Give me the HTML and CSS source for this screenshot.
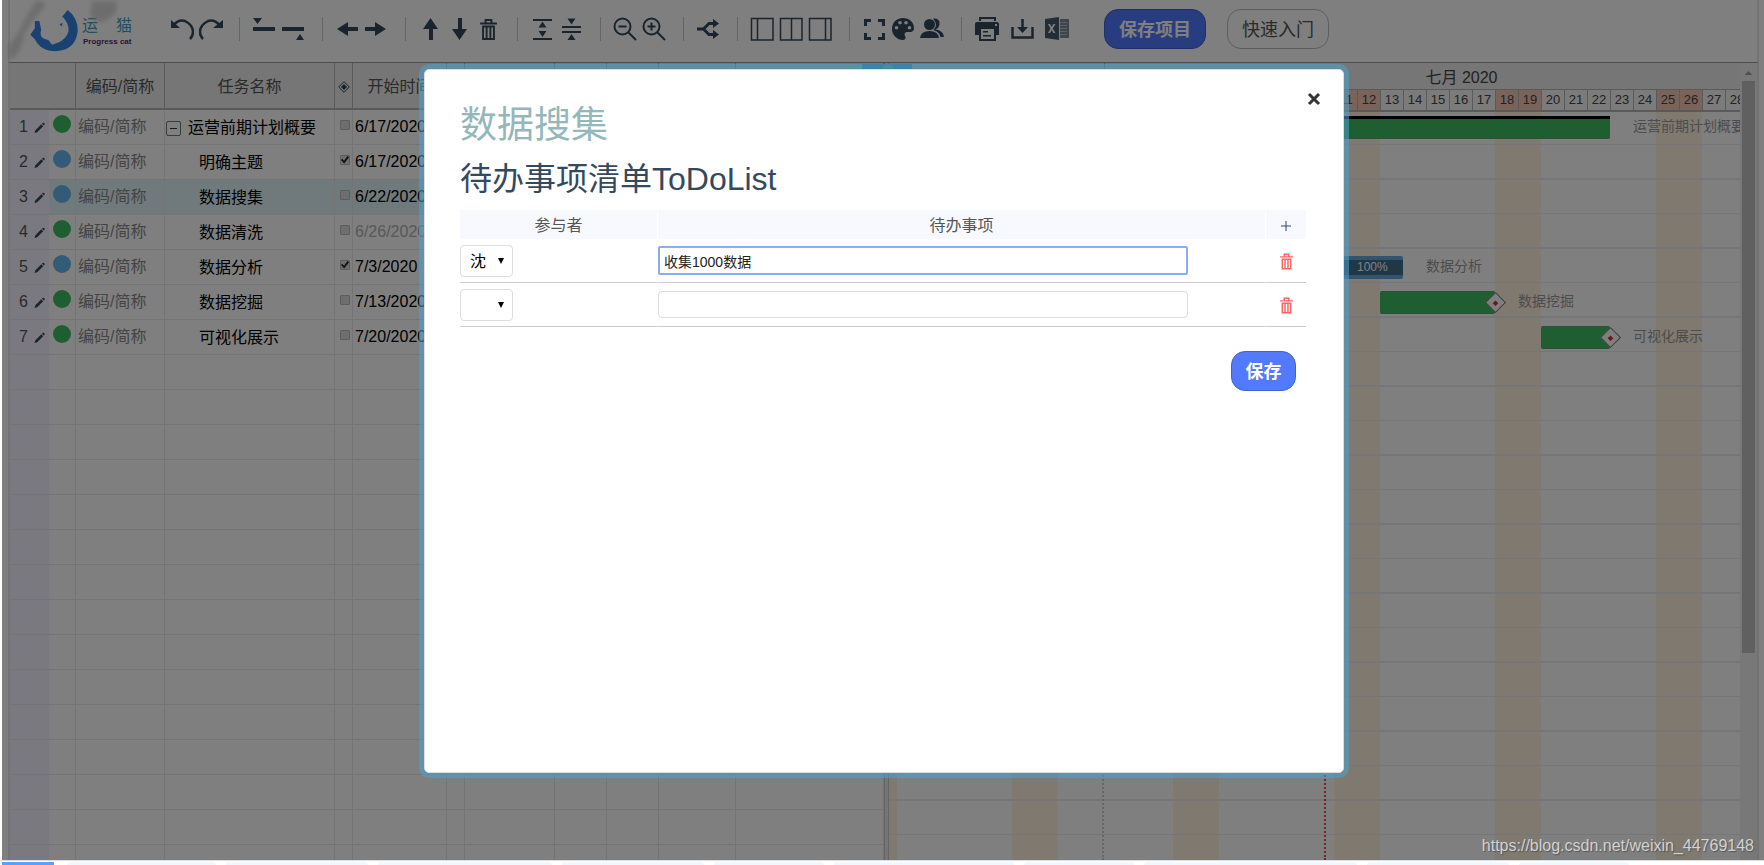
FILE: index.html
```html
<!DOCTYPE html>
<html lang="zh-CN">
<head>
<meta charset="utf-8">
<title>Progress cat</title>
<link rel="stylesheet" href="styles.css">
</head>
<body>
<svg class="sprite" aria-hidden="true">
  <symbol id="pencil" viewBox="0 0 12 12"><path d="M0.500 11.500 L1.500 8.500 L8 2 L10 4 L3.500 10.500Z M8.700 1.300 L9.700 .3 Q10.500 0 11.500 1 Q12 1.600 11.600 2.300 L10.700 3.300Z"/></symbol>
  <symbol id="trash" viewBox="0 0 16 20"><path fill="none" stroke="currentColor" stroke-width="1.800" d="M0 4.300H16M5.200 4V1H10.800V4M2.800 7V19H13.200V7M2 7.200H14M6.200 7V19M9.800 7V19"/></symbol>
</svg>
<div class="app">
  <header class="toolbar">
    <div class="logo">
      <svg class="logo-cat" viewBox="0 0 52 46" aria-hidden="true">
        <path fill="#3384e6" d="M35 7 L41 0 Q52 8 52 23 Q50 43 30 45 Q12 46 5 32 L0 27 L5 20 L5 12 L10 12 L12 22 Q10 28 14 31 L20 33 L24 38 L32 35 Q40 31 42 23 Q42 13 35 7Z M32 16 L35 14 L35 18Z"/>
      </svg>
      <div class="logo-words">
        <div class="logo-name"><span>运</span><span>猫</span></div>
        <div class="logo-sub">Progress cat</div>
      </div>
      <svg class="smudge" viewBox="0 0 130 62" aria-hidden="true">
        <path fill="#c4c4c4" d="M28 0 Q36 -2 37 6 Q24 18 16 34 Q14 52 2 59 L0 46 Q10 34 16 20Z M84 0 H108 Q112 12 100 18 Q90 26 82 14Z"/>
      </svg>
    </div>
    <div class="tools">
      <div class="group">
        <button aria-label="撤销"><svg viewBox="0 0 24 24"><path fill="none" stroke="currentColor" stroke-width="2.500" d="M3 9 Q8 2 15 4 Q23 8 23 15 Q23 19 20 22"/><path d="M1 3V11H10Z"/></svg></button>
        <button aria-label="重做"><svg viewBox="0 0 24 24"><path fill="none" stroke="currentColor" stroke-width="2.500" d="M21 9 Q16 2 9 4 Q1 8 1 15 Q1 19 4 22"/><path d="M24 3V11H14Z"/></svg></button>
      </div>
      <div class="group">
        <button aria-label="上方插入"><svg viewBox="0 0 24 24"><path d="M1 10H23V14H1Z M1 1H10L5.500 7Z"/></svg></button>
        <button aria-label="下方插入"><svg viewBox="0 0 24 24"><path d="M1 10H23V14H1Z M15 23H23L19 17Z"/></svg></button>
      </div>
      <div class="group">
        <button aria-label="升级"><svg viewBox="0 0 24 24"><path d="M2 12 L13 5V10H23V14H13V19Z"/></svg></button>
        <button aria-label="降级"><svg viewBox="0 0 24 24"><path d="M22 12 L11 5V10H1V14H11V19Z"/></svg></button>
      </div>
      <div class="group">
        <button aria-label="上移"><svg viewBox="0 0 24 24"><path d="M12.500 1 L20 12H15V23H11V12H5Z"/></svg></button>
        <button aria-label="下移"><svg viewBox="0 0 24 24"><path d="M12.500 23 L20 12H15V1H11V12H5Z"/></svg></button>
        <button aria-label="删除"><svg viewBox="0 0 24 24"><use href="#trash" x="4" y="2" width="17" height="21"/></svg></button>
      </div>
      <div class="group">
        <button aria-label="全部展开"><svg viewBox="0 0 24 24"><path d="M3 2H22V4H3Z M3 21H22V23H3Z M8.500 10.500H16.500L12.500 4.500Z M8.500 14H16.500L12.500 20Z"/></svg></button>
        <button aria-label="全部折叠"><svg viewBox="0 0 24 24"><path d="M3 9H22V11H3Z M3 14H22V16H3Z M8.500 1.500H16.500L12.500 7.500Z M8.500 23H16.500L12.500 17Z"/></svg></button>
      </div>
      <div class="group">
        <button aria-label="缩小"><svg viewBox="0 0 24 24"><g fill="none" stroke="currentColor" stroke-width="2"><circle cx="9.500" cy="9.500" r="8"/><path d="M15 15L23 23M5.500 9.500H13.500"/></g></svg></button>
        <button aria-label="放大"><svg viewBox="0 0 24 24"><g fill="none" stroke="currentColor" stroke-width="2"><circle cx="9.500" cy="9.500" r="8"/><path d="M15 15L23 23M5.500 9.500H13.500M9.500 5.500V13.500"/></g></svg></button>
      </div>
      <div class="group">
        <button aria-label="关联"><svg viewBox="0 0 24 24"><path fill="none" stroke="currentColor" stroke-width="3" d="M1 12H7M19 6.500H13L7.500 12L13 17.500H19"/><path d="M17 2L23 6.500L17 11Z M17 13L23 17.500L17 22Z"/></svg></button>
      </div>
      <div class="group">
        <button aria-label="左侧视图"><svg viewBox="0 0 24 24"><path fill="none" stroke="currentColor" stroke-width="1.500" d="M1.500 1.500H23V23H1.500ZM7.500 1.500V23"/></svg></button>
        <button aria-label="双栏视图"><svg viewBox="0 0 24 24"><path fill="none" stroke="currentColor" stroke-width="1.500" d="M1.500 1.500H23V23H1.500ZM12.500 1.500V23"/></svg></button>
        <button aria-label="右侧视图"><svg viewBox="0 0 24 24"><path fill="none" stroke="currentColor" stroke-width="1.500" d="M1.500 1.500H23V23H1.500ZM17.500 1.500V23"/></svg></button>
      </div>
      <div class="group">
        <button aria-label="全屏"><svg viewBox="0 0 24 24"><path fill="none" stroke="currentColor" stroke-width="3" d="M3.500 9V3.500H9M16 3.500H21.500V9M21.500 16V21.500H16M9 21.500H3.500V16"/></svg></button>
        <button aria-label="颜色"><svg viewBox="0 0 24 24"><path fill-rule="evenodd" d="M12 1C5 1 1 6 1 12S6 23 12 23C15 23 15 20 14 19C13 17 14 15 16.500 15H19C22 15 23 13 23 11C23 5 18 1 12 1ZM5.500 9A1.800 1.800 0 1 1 5.500 12.600A1.800 1.800 0 1 1 5.500 9ZM9 4A1.800 1.800 0 1 1 9 7.600A1.800 1.800 0 1 1 9 4ZM15 4A1.800 1.800 0 1 1 15 7.600A1.800 1.800 0 1 1 15 4ZM18.500 9A1.800 1.800 0 1 1 18.500 12.600A1.800 1.800 0 1 1 18.500 9Z"/></svg></button>
        <button aria-label="成员"><svg viewBox="0 0 24 24"><circle cx="9.500" cy="7.500" r="5.500"/><path d="M0 21Q1 14 9.500 14T19 21Z M13 1.500Q20 1 19.500 7Q19 11 15.500 12.500Q23.500 13.500 24 20H20.500Q19.500 15 13.500 13Q18.500 8 13 1.500Z"/></svg></button>
      </div>
      <div class="group files">
        <button aria-label="打印"><svg viewBox="0 0 24 24"><path fill-rule="evenodd" d="M4 0H21V4H19V2H6V4H4ZM2 5H22Q24 5 24 7V18H21V24H4V18H0V7Q0 5 2 5ZM6 12V22H19V12ZM20 7V9H22V7ZM8 14H13V15.500H8ZM8 18H16V19.500H8Z"/></svg></button>
        <button aria-label="下载"><svg viewBox="0 0 24 24"><path fill="none" stroke="currentColor" stroke-width="2.500" d="M2.500 10V20.500H22.500V10M12.500 2V13"/><path d="M7 10H18L12.500 16Z"/></svg></button>
        <button class="excel" aria-label="导出表格"><svg viewBox="0 0 24 24"><path fill-rule="evenodd" d="M0 2L14 0V23L0 21ZM3 7L5.500 11.500L3 16H5L6.700 13L8.500 16H10.500L7.700 11.500L10.500 7H8.500L6.700 10L5 7Z"/><path d="M15 2H24V21H15Z" opacity=".7"/><path stroke="#bbb" d="M15 5.500H22M15 8.500H22M15 11.500H22M15 14.500H22M15 17.500H22"/></svg></button>
      </div>
    </div>
    <button class="pill primary">保存项目</button>
    <button class="pill plain">快速入门</button>
  </header>

  <main class="workspace">
    <section class="sheet">
      <table class="tasks">
        <colgroup><col class="c-num"><col class="c-dot"><col class="c-code"><col class="c-name"><col class="c-mark"><col class="c-date"><col class="c-mark"><col class="c-end"><col class="c-small"><col class="c-small"><col class="c-mid"><col></colgroup>
        <thead><tr><th class="joined"></th><th></th><th>编码/简称</th><th>任务名称</th><th><svg class="mile" viewBox="0 0 12 12" aria-hidden="true"><path fill="none" stroke="currentColor" d="M6 .7L11.300 6L6 11.300L.7 6Z"/><path d="M6 3L9 6L6 9L3 6Z"/></svg></th><th>开始时间</th><th></th><th></th><th></th><th></th><th></th><th></th></tr></thead>
        <tbody>
          <tr><td><span class="num">1<svg><use href="#pencil"/></svg></span></td><td><i class="dot green"></i></td><td class="code">编码/简称</td><td class="name parent"><button class="fold" aria-label="折叠"></button>运营前期计划概要</td><td><input type="checkbox" aria-label="里程碑 1"></td><td class="date">6/17/2020</td><td><td><td><td><td><td></tr>
          <tr><td><span class="num">2<svg><use href="#pencil"/></svg></span></td><td><i class="dot blue"></i></td><td class="code">编码/简称</td><td class="name">明确主题</td><td><input type="checkbox" checked aria-label="里程碑 2"></td><td class="date">6/17/2020</td><td><td><td><td><td><td></tr>
          <tr class="selected"><td><span class="num">3<svg><use href="#pencil"/></svg></span></td><td><i class="dot blue"></i></td><td class="code">编码/简称</td><td class="name">数据搜集</td><td><input type="checkbox" aria-label="里程碑 3"></td><td class="date">6/22/2020</td><td><td><td><td><td><td></tr>
          <tr><td><span class="num">4<svg><use href="#pencil"/></svg></span></td><td><i class="dot green"></i></td><td class="code">编码/简称</td><td class="name">数据清洗</td><td><input type="checkbox" aria-label="里程碑 4"></td><td class="date faded">6/26/2020</td><td><td><td><td><td><td></tr>
          <tr><td><span class="num">5<svg><use href="#pencil"/></svg></span></td><td><i class="dot blue"></i></td><td class="code">编码/简称</td><td class="name">数据分析</td><td><input type="checkbox" checked aria-label="里程碑 5"></td><td class="date">7/3/2020</td><td><td><td><td><td><td></tr>
          <tr><td><span class="num">6<svg><use href="#pencil"/></svg></span></td><td><i class="dot green"></i></td><td class="code">编码/简称</td><td class="name">数据挖掘</td><td><input type="checkbox" aria-label="里程碑 6"></td><td class="date">7/13/2020</td><td><td><td><td><td><td></tr>
          <tr><td><span class="num">7<svg><use href="#pencil"/></svg></span></td><td><i class="dot green"></i></td><td class="code">编码/简称</td><td class="name">可视化展示</td><td><input type="checkbox" aria-label="里程碑 7"></td><td class="date">7/20/2020</td><td><td><td><td><td><td></tr>
          <tr><td><td><td><td><td><td><td><td><td><td><td><td></tr>
          <tr><td><td><td><td><td><td><td><td><td><td><td><td></tr>
          <tr><td><td><td><td><td><td><td><td><td><td><td><td></tr>
          <tr><td><td><td><td><td><td><td><td><td><td><td><td></tr>
          <tr><td><td><td><td><td><td><td><td><td><td><td><td></tr>
          <tr><td><td><td><td><td><td><td><td><td><td><td><td></tr>
          <tr><td><td><td><td><td><td><td><td><td><td><td><td></tr>
          <tr><td><td><td><td><td><td><td><td><td><td><td><td></tr>
          <tr><td><td><td><td><td><td><td><td><td><td><td><td></tr>
          <tr><td><td><td><td><td><td><td><td><td><td><td><td></tr>
          <tr><td><td><td><td><td><td><td><td><td><td><td><td></tr>
          <tr><td><td><td><td><td><td><td><td><td><td><td><td></tr>
          <tr><td><td><td><td><td><td><td><td><td><td><td><td></tr>
          <tr><td><td><td><td><td><td><td><td><td><td><td><td></tr>
          <tr><td><td><td><td><td><td><td><td><td><td><td><td></tr>
        </tbody>
      </table>
    </section>
    <div class="splitter"><div class="split-nav"><span></span></div></div>
    <section class="gantt">
      <div class="scale">
        <div class="month june"></div>
        <div class="month july">
          <div class="month-name">七月 2020</div>
          <div class="days"><span>1</span><span>2</span><span>3</span><span class="off">4</span><span class="off">5</span><span>6</span><span>7</span><span>8</span><span>9</span><span>10</span><span class="off">11</span><span class="off">12</span><span>13</span><span>14</span><span>15</span><span>16</span><span>17</span><span class="off">18</span><span class="off">19</span><span>20</span><span>21</span><span>22</span><span>23</span><span>24</span><span class="off">25</span><span class="off">26</span><span>27</span><span>28</span></div>
        </div>
      </div>
      <div class="chart">
        <div class="month-line"></div>
        <div class="today-line"></div>
        <div class="bar summary" style="left:54px;top:4px;width:667px"></div><div class="label" style="left:744px;top:4px">运营前期计划概要</div>
        <div class="bar work" style="left:261px;top:144px;width:253px"></div><div class="percent" style="left:468px;top:147px">100%</div><div class="label" style="left:537px;top:144px">数据分析</div>
        <div class="bar" style="left:491px;top:179px;width:115px"></div><div class="stone" style="left:599px;top:183px"></div><div class="label" style="left:629px;top:179px">数据挖掘</div>
        <div class="bar" style="left:652px;top:214px;width:69px"></div><div class="stone" style="left:714px;top:218px"></div><div class="label" style="left:744px;top:214px">可视化展示</div>
      </div>
    </section>
    <div class="scrollbar"><i class="arrow"></i><i class="thumb"></i></div>
  </main>

  <div class="shade">
    <div class="dialog" role="dialog" aria-labelledby="dlg-title">
      <button class="close" aria-label="关闭"><svg viewBox="0 0 14 14"><path d="M2 2L12 12M12 2L2 12"/></svg></button>
      <h1 id="dlg-title">数据搜集</h1>
      <h2>待办事项清单ToDoList</h2>
      <table class="todo">
        <colgroup><col class="t-who"><col><col class="t-act"></colgroup>
        <thead><tr><th>参与者</th><th>待办事项</th><th><button class="add" aria-label="添加"><svg viewBox="0 0 10 10"><path d="M0 5H10M5 0V10"/></svg></button></th></tr></thead>
        <tbody>
          <tr><td><select aria-label="参与者 1"><option>沈</option></select></td><td><input class="item active" type="text" value="收集1000数据" aria-label="待办事项 1"></td><td><button class="del" aria-label="删除 1"><svg><use href="#trash"/></svg></button></td></tr>
          <tr><td><select aria-label="参与者 2"><option></option></select></td><td><input class="item" type="text" aria-label="待办事项 2"></td><td><button class="del" aria-label="删除 2"><svg><use href="#trash"/></svg></button></td></tr>
        </tbody>
      </table>
      <div class="actions"><button class="pill primary small">保存</button></div>
    </div>
    <div class="watermark">https://blog.csdn.net/weixin_44769148</div>
  </div>
</div>
<footer class="tabs"><i class="current"></i><i class="w4"></i><i class="w3"></i><i class="w5"></i><i class="w3"></i><i class="w1"></i><i class="w6"></i><i class="w1"></i><i class="w7"></i><i class="w3"></i><i class="w1"></i></footer>
</body>
</html>
```
FILE: styles.css
```css
* { box-sizing: border-box; }
body {
  margin: 0;
  height: 100vh;
  display: flex;
  flex-direction: column;
  overflow: hidden;
  background: #fff;
  color: #555;
  font: 16px/24px "Liberation Sans", "Noto Sans CJK SC", sans-serif;
}
button { font: inherit; color: inherit; background: none; border: 0; padding: 0; }
svg { display: block; fill: currentColor; }
.sprite { position: absolute; width: 0; height: 0; }

.app {
  position: relative;
  flex: 1;
  min-height: 0;
  margin-left: 2px;
  padding: 0 5px 0 6px;
  display: flex;
  flex-direction: column;
  background: #fff;
}

/* toolbar */
.toolbar {
  flex: none;
  display: flex;
  align-items: center;
  height: 63px;
  padding-bottom: 4px;
  border: solid #e6e6e6;
  border-width: 0 2px;
  border-bottom: 1px solid #999;
  color: #34495e;
}
.logo { position: relative; display: flex; width: 147px; padding-left: 20px; gap: 4px; }
.logo-cat { width: 48px; height: 42px; margin-top: 3px; }
.logo-words { padding-top: 9px; }
.logo-name { display: flex; justify-content: space-between; width: 50px; line-height: 20px; color: #3aa0c8; }
.logo-sub { font-size: 8px; line-height: 12px; font-weight: bold; color: #5b2a63; white-space: nowrap; padding-left: 1px; }
.smudge { position: absolute; left: -2px; top: -6px; width: 130px; height: 62px; filter: blur(2px); opacity: .6; }
.tools { display: flex; }
.group { display: flex; align-items: center; gap: 5px; height: 24px; padding: 0 16px 0 13px; }
.group + .group { border-left: 1px solid #c8c8c8; }
.group + .group { padding-left: 12px; padding-right: 17px; }
.group button, .group svg { width: 24px; height: 24px; }
.group.files { gap: 11px; padding-left: 13px; padding-right: 35px; }
.group .excel { opacity: .9; }
.pill { height: 40px; width: 102px; padding-top: 1px; font-size: 18px; border-radius: 14px; border: 1px solid #3f62d0; flex: none; }
.pill.primary { background: #517aff; color: #fff; font-weight: bold; }
.toolbar .primary { margin-right: 21px; }
.pill.plain { border-color: #bbb; color: #555; }
.pill.small { width: 65px; }

/* task sheet */
.workspace { flex: 1; min-height: 0; display: flex; overflow: hidden; border: solid #e6e6e6; border-width: 0 2px; }
.sheet { flex: none; overflow: hidden; }
.tasks { table-layout: fixed; width: 874px; border-collapse: separate; border-spacing: 0; }
.c-num { width: 39px; } .c-dot { width: 27px; } .c-code { width: 89px; } .c-name { width: 170px; }
.c-mark { width: 18px; } .c-date { width: 94px; } .c-end { width: 90px; } .c-small { width: 52px; } .c-mid { width: 77px; }
.tasks th {
  height: 47px; padding: 2px 0 0; background: #ececec; font-weight: normal; white-space: nowrap;
  border-right: 1px solid #b4b4b4; border-bottom: 2px solid #b4b4b4;
}
.tasks .joined { border-right: 0; }
.mile { width: 12px; height: 12px; margin: auto; color: #34495e; }
.tasks td {
  height: 35px; padding: 0; white-space: nowrap; color: #000;
  border-right: 1px solid #e8e8e8; border-bottom: 1px solid #e8e8e8;
}
.tasks td:first-child { background: #f5f3ff; border-right: 0; }
.tasks .selected td:not(:first-child) { background: #e0f3f9; }
.num { display: flex; align-items: center; gap: 6px; padding-left: 9px; color: #555; }
.num svg { width: 11px; height: 12px; margin-top: 2px; color: #34495e; }
.dot { display: block; width: 18px; height: 18px; margin: 0 0 6px 4px; border-radius: 50%; }
.green { background: #3cbc60; }
.blue { background: #66b4ee; }
.tasks .code { color: #888; padding-left: 2px; }
.tasks .name { padding: 2px 0 0 34px; }
.tasks .parent { padding-left: 1px; }
.fold {
  position: relative; width: 15px; height: 15px; margin-right: 7px; vertical-align: -2px;
  border: 1px solid #777; border-radius: 2px;
}
.fold::after { content: ""; position: absolute; left: 3px; right: 3px; top: 6px; height: 1px; background: #333; }
.tasks input {
  appearance: none; display: block; width: 10px; height: 10px; margin: 0 0 4px 5px;
  border: 1px solid #bbb; background: #ddd; border-radius: 1px;
}
.tasks input:checked::after {
  content: ""; display: block; width: 8px; height: 8px; background: #222;
  clip-path: polygon(0 50%, 15% 35%, 38% 58%, 82% 0, 100% 15%, 40% 95%);
}
.tasks .date { padding-left: 2px; }
.tasks .faded { color: #b0b0b0; }

.splitter { position: relative; flex: none; width: 5px; background: #ebebeb; border: solid #c8c8c8; border-width: 0 1px; }
.split-nav { position: absolute; z-index: 1; left: -23px; top: 1px; width: 50px; height: 20px; background: #62c0e0; }
.split-nav span { position: absolute; left: 20px; width: 12px; height: 12px; border-radius: 50%; background: #a0d4e8; }

/* gantt */
.gantt { flex: 1; min-width: 0; display: flex; flex-direction: column; overflow: hidden; }
.scale { flex: none; display: flex; height: 49px; background: #ececec; border-bottom: 2px solid #b4b4b4; color: #444; }
.month { flex: none; }
.june { width: 215px; }
.july { width: 714px; border-left: 1px solid #b4b4b4; }
.month-name { height: 27px; line-height: 30px; text-align: center; border-bottom: 1px solid #b4b4b4; }
.days { display: flex; font-size: 13px; line-height: 20px; text-align: center; }
.days span { width: 23px; height: 20px; background: #f6f6f6; border-right: 1px solid #b4b4b4; }
.days .off { background: #f5c8b4; }
.chart {
  position: relative; flex: 1; overflow: hidden;
  background:
    repeating-linear-gradient(180deg, transparent 0 32px, #ececf0 32px 33px, transparent 33px 66px, #ececf0 66px 68px, transparent 68px 69px),
    repeating-linear-gradient(90deg, #fff2e0 0 8px, transparent 8px 123px, #fff2e0 123px 161px);
}
.bar, .stone, .label, .percent, .month-line, .today-line { position: absolute; }
.bar { height: 23px; background: #3cbc60; border: solid #58a070; border-width: 1px 0; border-radius: 2px; }
.summary { border-top: 3px solid #000; border-radius: 0 0 2px 2px; }
.work { background: #416e8c; border: solid #66a8dc; border-width: 4px 0; }
.percent { font-size: 12px; line-height: 16px; color: #fff; }
.label { font-size: 14px; line-height: 20px; color: #999; white-space: nowrap; }
.stone { width: 15px; height: 15px; background: #fff linear-gradient(#d03030, #d03030) center / 4px 4px no-repeat; border: 1px solid #777; transform: rotate(45deg); }
.month-line { top: 0; bottom: 0; left: 213px; border-left: 2px dotted #ccc; }
.today-line { top: 0; bottom: 0; left: 435px; border-left: 2px dotted #e04860; }
.scrollbar { flex: none; width: 17px; padding: 8px 2px 0; background: #f0f0f0; }
.arrow { display: block; height: 4px; width: 8px; margin: 0 auto 6px; background: #a0a0a0; clip-path: polygon(50% 0, 100% 100%, 0 100%); }
.thumb { display: block; height: calc(73% - 4px); background: #c0c0c0; }

/* dialog */
.shade { position: absolute; z-index: 2; inset: 0; padding: 69px 0 0 2px; background: rgba(0, 0, 0, .5); }
.dialog {
  position: relative; width: 920px; min-height: 704px; margin: 0 auto; padding: 34px 37px 0 35px;
  background: #fff; border: 1px solid #ddd; border-radius: 5px;
  box-shadow: 0 0 0 5px rgba(76, 162, 208, .55);
}
.close { position: absolute; top: 22px; right: 22px; }
.close svg { width: 14px; height: 14px; stroke: #333; stroke-width: 3; }
h1, h2 { margin: 0; font-weight: normal; }
h1 { font-size: 37px; line-height: 44px; color: #93b7bb; }
h2 { font-size: 32px; line-height: 40px; margin: 11px 0; color: #34495e; }
.todo { table-layout: fixed; width: 100%; border-collapse: separate; border-spacing: 0; }
.t-who { width: 197px; }
.t-act { width: 41px; }
.todo th { height: 29px; padding: 2px 0 0; background: #f8f9ff; font-weight: normal; }
.todo td { height: 44px; padding: 0; border-bottom: 1px solid #ccc; }
.todo th + th, .todo td + td { border-left: 1px solid #fff; }
.todo svg { margin: auto; }
.add { display: block; margin: auto; }
.add svg { width: 10px; height: 10px; stroke: #34495e; stroke-width: 1; }
.todo select {
  appearance: none; display: block; width: 53px; height: 32px; padding: 3px 9px 0; font: inherit; color: #000;
  border: 1px solid #ddd; border-radius: 4px; background: #fff;
}
.todo td:first-child { position: relative; }
.todo td:first-child::after {
  content: ""; position: absolute; left: 38px; top: 19px; width: 6px; height: 6px;
  background: #000; clip-path: polygon(0 0, 100% 0, 50% 100%); pointer-events: none;
}
.item {
  display: block; width: 530px; max-width: 100%; height: 27px; padding: 0 6px;
  font: 14px "Liberation Sans", "Noto Sans CJK SC", sans-serif; color: #222;
  border: 1px solid #ddd; border-radius: 4px; background: #fff; outline: 0;
}
.item.active { border: 2px solid #86aef5; border-radius: 2px; height: 29px; padding: 0 4px; }
.del { display: block; margin: auto; padding-top: 2px; color: #ff6464; }
.del svg { width: 13px; height: 17px; }
.actions { display: flex; justify-content: flex-end; padding: 24px 10px 0 0; }
.watermark { position: absolute; right: 10px; bottom: 2px; color: #d2d2d2; text-shadow: 1px 1px 1px #555; }

/* lower tabs */
.tabs { flex: none; display: flex; gap: 10px; height: 5px; padding: 1px 0 0 2px; border-top: 1px solid #ddd; }
.tabs i { flex: none; height: 4px; background: #eff7ff; border-radius: 3px 3px 0 0; }
.tabs .current { width: 52px; margin-right: 3px; background: #5ba0ff; border-radius: 0; }
.w1 { width: 110px; } .w3 { width: 142px; } .w4 { width: 149px; } .w5 { width: 174px; } .w6 { width: 180px; } .w7 { width: 213px; }
```
